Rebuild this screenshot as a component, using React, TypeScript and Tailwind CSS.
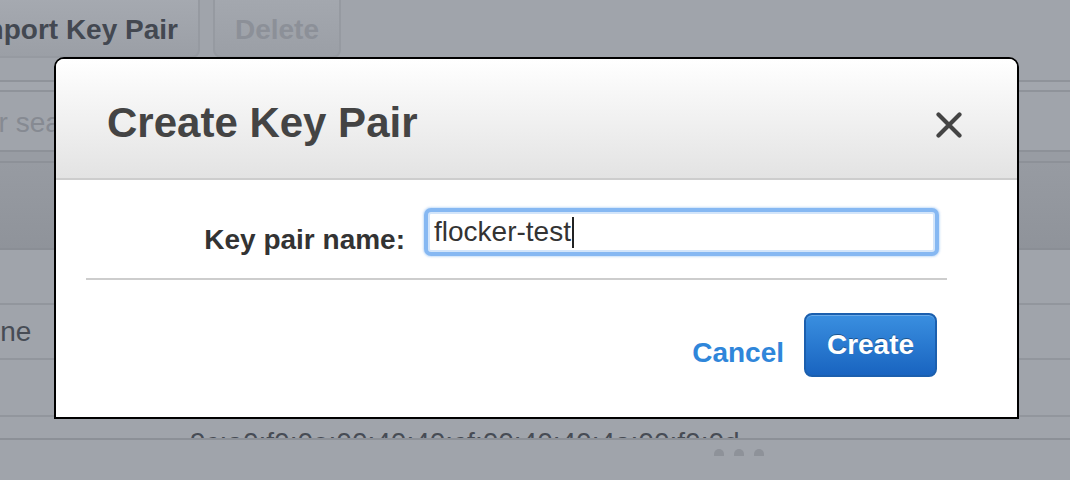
import React from "react";

export default function App() {
  return (
    <div className="relative w-[1070px] h-[480px] overflow-hidden bg-[#a0a4ab] font-['Liberation_Sans',Arial,sans-serif]">
      {/* background page (dimmed) */}
      <div className="flex flex-col">
        <div className="flex h-[58px] gap-[13px]">
          <div className="-ml-[51px] -mt-[12px] h-[70px] flex items-center pt-[14px] px-[20px] rounded-[8px] border-2 border-[#969aa1] bg-gradient-to-b from-[#a7abb2] to-[#9b9fa6] text-[28px] font-bold text-[#434851] whitespace-nowrap">
            Import Key Pair
          </div>
          <div className="-mt-[12px] h-[70px] flex items-center pt-[14px] px-[20px] rounded-[8px] border-2 border-[#969aa1] bg-gradient-to-b from-[#a5a9b0] to-[#9b9fa6] text-[28px] font-bold text-[#8c9098] whitespace-nowrap">
            Delete
          </div>
        </div>
        <div className="h-[22px]" />
        <div className="h-[12px] border-y-2 border-[#8f939a] bg-[#a2a6ad]" />
        <div className="h-[58px] flex items-center pt-[4px]">
          <span className="-ml-[17px] text-[28px] text-[#868a92] whitespace-nowrap">or search by keyword</span>
        </div>
        <div className="h-[13px] border-y-2 border-[#8d9198] bg-[#989ca3]" />
        <div className="h-[87px] bg-gradient-to-b from-[#979ba2] to-[#8f939a] border-b-2 border-[#8a8e95]" />
        <div className="h-[55px] border-b-2 border-[#92969d]" />
        <div className="h-[55px] border-b-2 border-[#92969d] flex items-center">
          <span className="-ml-[31px] text-[28px] text-[#474c55] whitespace-nowrap">none</span>
        </div>
        <div className="h-[57px] border-b-2 border-[#92969d]" />
        <div className="h-[23px] border-b-2 border-[#8c9097] overflow-hidden">
          <div className="pl-[190px] pt-[12px] text-[28px] leading-none text-[#474c55] whitespace-nowrap">
            9c:a0:f0:0e:00:40:40:cf:00:40:40:4a:00:f0:0d
          </div>
        </div>
        <div className="flex pl-[714px] pt-[9px] gap-[10px]">
          <div className="w-[10px] h-[7px] rounded-t-full bg-[#8e9299]" />
          <div className="w-[10px] h-[7px] rounded-t-full bg-[#8e9299]" />
          <div className="w-[10px] h-[7px] rounded-t-full bg-[#8e9299]" />
        </div>
      </div>

      {/* modal */}
      <div className="absolute left-[54px] top-[57px] w-[965px] h-[362px] border-2 border-black rounded-t-[10px] bg-white overflow-hidden flex flex-col">
        <div className="h-[121px] shrink-0 flex justify-between bg-gradient-to-b from-white to-[#e3e3e3] border-b-2 border-[#cdcdcd]">
          <div className="pl-[51px] pt-[43px] text-[42px] leading-none font-bold text-[#444444] whitespace-nowrap">
            Create Key Pair
          </div>
          <div className="mt-[53px] mr-[55px]">
            <svg width="26" height="26" viewBox="0 0 26 26">
              <path d="M2.5 2.5 L23.5 23.5 M23.5 2.5 L2.5 23.5" stroke="#444444" strokeWidth="4.2" strokeLinecap="round" fill="none" />
            </svg>
          </div>
        </div>
        <div className="flex flex-col pt-[32px]">
          <div className="flex items-center h-[40px]">
            <div className="w-[349px] mt-[16px] text-right text-[28px] font-bold text-[#333333] whitespace-nowrap">
              Key pair name:
            </div>
            <div className="ml-[23px] w-[507px] h-[40px] flex items-center pl-[4px] rounded-[3px] border-2 border-[#d3e5fa] bg-white shadow-[0_0_0_4px_#86b8f2,0_0_2px_5px_rgba(134,184,242,0.45)]">
              <span className="text-[28px] text-[#333333] whitespace-nowrap">flocker-test</span>
              <span className="ml-[1px] w-[2px] h-[31px] bg-[#222222]" />
            </div>
          </div>
          <div className="mt-[26px] ml-[30px] mr-[70px] h-[2px] bg-[#cdcdcd]" />
          <div className="mt-[33px] flex justify-end items-center pr-[80px] gap-[20px]">
            <span className="mt-[16px] text-[28px] font-bold text-[#2f86da]">Cancel</span>
            <div className="w-[133px] h-[64px] flex items-center justify-center rounded-[8px] border-2 border-[#1b5fae] bg-gradient-to-b from-[#3a8fe0] to-[#1964c0] text-[28px] font-bold text-white [text-shadow:0_-1px_0_rgba(0,0,0,0.35)] shadow-[inset_0_1px_0_rgba(255,255,255,0.25)]">
              Create
            </div>
          </div>
        </div>
      </div>
    </div>
  );
}
